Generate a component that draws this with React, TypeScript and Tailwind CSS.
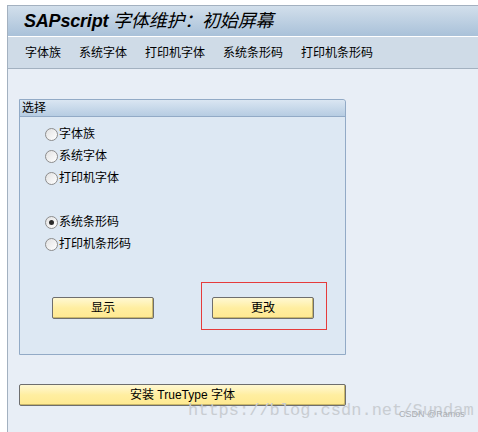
import * as React from 'react'

const cjk = { fontFamily: '"Liberation Sans", "Noto Sans CJK SC", sans-serif' }

function Radio({ label, checked }: { label: string; checked?: boolean }) {
    return (
        <div className="flex h-[22px] items-center">
            <span className="flex h-[13px] w-[13px] items-center justify-center rounded-full border border-[#8c8c8c] bg-gradient-to-br from-[#e2e2e2] to-white">
                {checked && <span className="h-[5px] w-[5px] rounded-full bg-[#2a2a2a]" />}
            </span>
            <span className="ml-[1px] text-[12px] leading-none text-black">{label}</span>
        </div>
    )
}

function SapButton({ label, className }: { label: string; className?: string }) {
    return (
        <button
            className={
                'flex h-[22px] items-center justify-center rounded-[2px] border border-[#6e6e6e] bg-gradient-to-b from-[#fff8d2] via-[#ffeea0] to-[#ffe991] text-[12px] leading-none text-black shadow-[inset_-1px_-1px_0_#c9b76a] ' +
                (className ?? '')
            }
        >
            {label}
        </button>
    )
}

export default function App() {
    return (
        <div className="relative h-[432px] w-[478px] overflow-hidden bg-white pl-[7px] pt-[5px]" style={cjk}>
            <div className="h-full border-l border-t border-[#a3b1c0] bg-[#e8eef6]">
                <div className="flex h-[30px] items-center bg-gradient-to-b from-[#d2dfeb] to-[#a9c1d9] pl-[16px]">
                    <span className="text-[18px] font-bold italic leading-none tracking-[-0.2px] text-black">
                        SAPscript <span className="font-normal">字体维护：初始屏幕</span>
                    </span>
                </div>
                <div className="h-px bg-white" />
                <nav className="flex h-[32px] items-center gap-[18px] border-b border-[#a3b1c0] bg-[#cfdbe7] pl-[17px] text-[12px] text-black">
                    <span>字体族</span>
                    <span>系统字体</span>
                    <span>打印机字体</span>
                    <span>系统条形码</span>
                    <span>打印机条形码</span>
                </nav>

                <section className="ml-[11px] mt-[30px] h-[256px] w-[327px] rounded-tr-[3px] border border-[#92aac6] bg-[#dde8f3]">
                    <div className="flex h-[17px] items-center rounded-tr-[3px] border-b border-[#92aac6] bg-gradient-to-b from-[#dae6f2] to-[#b6cce2] pl-[2px] text-[12px] leading-none text-black">
                        选择
                    </div>
                    <div className="pl-[25px] pt-[6px]">
                        <Radio label="字体族" />
                        <Radio label="系统字体" />
                        <Radio label="打印机字体" />
                        <div className="h-[22px]" />
                        <Radio label="系统条形码" checked />
                        <Radio label="打印机条形码" />
                    </div>
                    <div className="mt-[42px] flex pl-[32px]">
                        <SapButton label="显示" className="w-[102px]" />
                        <div className="relative ml-[58px]">
                            <SapButton label="更改" className="w-[102px]" />
                            <div className="pointer-events-none absolute left-[-11px] top-[-15px] h-[48px] w-[126px] border border-[#e53b3b]" />
                        </div>
                    </div>
                </section>

                <SapButton label="安装 TrueType 字体" className="ml-[11px] mt-[29px] w-[327px]" />
            </div>

            <div
                className="absolute left-[188px] top-[402px] text-[17px] leading-none text-[#c9cdd2]"
                style={{ fontFamily: '"Liberation Mono", monospace' }}
            >
                https://blog.csdn.net/Sundam
            </div>
            <div className="absolute left-[399px] top-[410px] text-[9px] leading-none text-[#a9adb2]">CSDN @Ramos</div>
        </div>
    )
}
